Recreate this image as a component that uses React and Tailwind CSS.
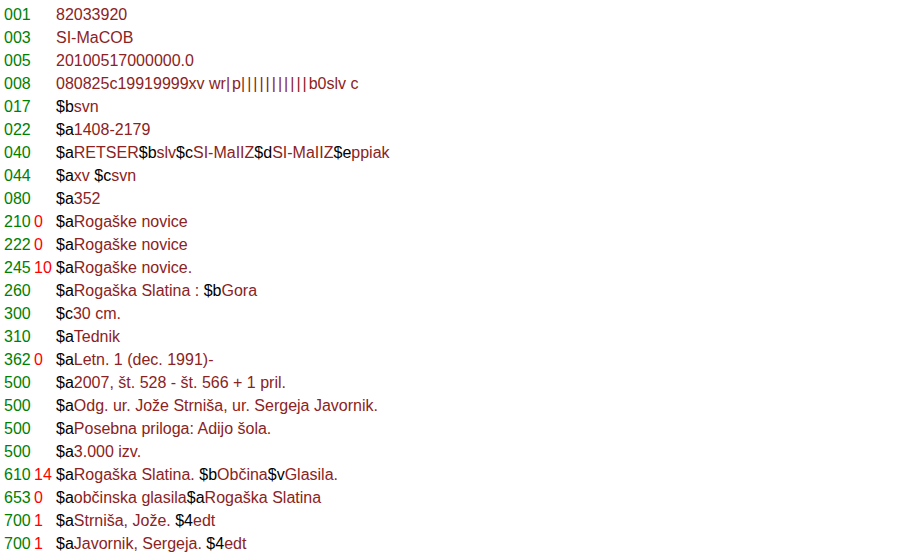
const records = [
  { tag: "001", ind: "", data: [["", "82033920"]] },
  { tag: "003", ind: "", data: [["", "SI-MaCOB"]] },
  { tag: "005", ind: "", data: [["", "20100517000000.0"]] },
  { tag: "008", ind: "", data: [["", "080825c19919999xv wr|p|||||||||||b0slv c"]] },
  { tag: "017", ind: "", data: [["b", "svn"]] },
  { tag: "022", ind: "", data: [["a", "1408-2179"]] },
  {
    tag: "040",
    ind: "",
    data: [
      ["a", "RETSER"],
      ["b", "slv"],
      ["c", "SI-MaIIZ"],
      ["d", "SI-MaIIZ"],
      ["e", "ppiak"],
    ],
  },
  { tag: "044", ind: "", data: [["a", "xv "], ["c", "svn"]] },
  { tag: "080", ind: "", data: [["a", "352"]] },
  { tag: "210", ind: "0", data: [["a", "Rogaške novice"]] },
  { tag: "222", ind: "0", data: [["a", "Rogaške novice"]] },
  { tag: "245", ind: "10", data: [["a", "Rogaške novice."]] },
  { tag: "260", ind: "", data: [["a", "Rogaška Slatina : "], ["b", "Gora"]] },
  { tag: "300", ind: "", data: [["c", "30 cm."]] },
  { tag: "310", ind: "", data: [["a", "Tednik"]] },
  { tag: "362", ind: "0", data: [["a", "Letn. 1 (dec. 1991)-"]] },
  { tag: "500", ind: "", data: [["a", "2007, št. 528 - št. 566 + 1 pril."]] },
  { tag: "500", ind: "", data: [["a", "Odg. ur. Jože Strniša, ur. Sergeja Javornik."]] },
  { tag: "500", ind: "", data: [["a", "Posebna priloga: Adijo šola."]] },
  { tag: "500", ind: "", data: [["a", "3.000 izv."]] },
  {
    tag: "610",
    ind: "14",
    data: [
      ["a", "Rogaška Slatina. "],
      ["b", "Občina"],
      ["v", "Glasila."],
    ],
  },
  { tag: "653", ind: "0", data: [["a", "občinska glasila"], ["a", "Rogaška Slatina"]] },
  { tag: "700", ind: "1", data: [["a", "Strniša, Jože. "], ["4", "edt"]] },
  { tag: "700", ind: "1", data: [["a", "Javornik, Sergeja. "], ["4", "edt"]] },
];

// pipes in the fixed field are drawn wider in the original font
function Value({ text }) {
  const parts = text.split(/(\|+)/);
  return (
    <span className="text-[#8b2323]">
      {parts.map((p, i) =>
        p.startsWith("|") ? (
          <span key={i} className="tracking-[2px]">
            {p}
          </span>
        ) : (
          p
        )
      )}
    </span>
  );
}

function Row({ rec }) {
  return (
    <div className="flex h-[23px] items-center whitespace-pre">
      <span className="w-[30px] shrink-0 text-[#008000]">{rec.tag}</span>
      <span className="w-[22px] shrink-0 text-[#ff0000]">{rec.ind}</span>
      <span>
        {rec.data.map(([code, value], i) => (
          <span key={i}>
            {code ? <span className="text-black">${code}</span> : null}
            <Value text={value} />
          </span>
        ))}
      </span>
    </div>
  );
}

export default function App() {
  return (
    <div className="min-h-screen w-[900px] bg-white pl-[4px] pt-[3px] font-['Liberation_Sans',Arial,sans-serif] text-[16px] leading-[23px]">
      {records.map((rec, i) => (
        <Row key={i} rec={rec} />
      ))}
    </div>
  );
}
